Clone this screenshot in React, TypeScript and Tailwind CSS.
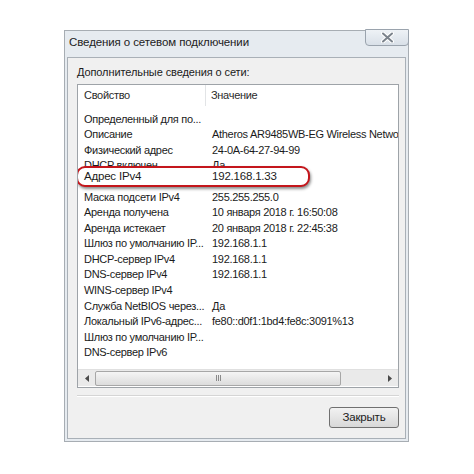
import React from 'react';

const rows: [string, string][] = [
  ['Определенный для по...', ''],
  ['Описание', 'Atheros AR9485WB-EG Wireless Network Adapter'],
  ['Физический адрес', '24-0A-64-27-94-99'],
  ['DHCP включен', 'Да'],
  ['Адрес IPv4', '192.168.1.33'],
  ['Маска подсети IPv4', '255.255.255.0'],
  ['Аренда получена', '10 января 2018 г. 16:50:08'],
  ['Аренда истекает', '20 января 2018 г. 22:45:38'],
  ['Шлюз по умолчанию IP...', '192.168.1.1'],
  ['DHCP-сервер IPv4', '192.168.1.1'],
  ['DNS-сервер IPv4', '192.168.1.1'],
  ['WINS-сервер IPv4', ''],
  ['Служба NetBIOS через...', 'Да'],
  ['Локальный IPv6-адрес...', 'fe80::d0f1:1bd4:fe8c:3091%13'],
  ['Шлюз по умолчанию IP...', ''],
  ['DNS-сервер IPv6', ''],
];

const font = { fontFamily: '"Liberation Sans", Arial, sans-serif' };

const App: React.FC = () => {
  return (
    <div className="w-[474px] h-[474px] bg-white pt-[30px] pl-[64px] text-[#1b1b1b]" style={font}>
      {/* Dialog window */}
      <div className="relative w-[345px] h-[412px] bg-[#e6ebf0] border border-[#a7adb3] flex flex-col px-[2px] pb-[2px]">
        {/* Title bar */}
        <div className="h-[26px] flex items-center pl-[2px] pb-[2px] text-[11.5px] tracking-[-0.1px] text-[#222]">
          Сведения о сетевом подключении
        </div>
        <div className="absolute right-[-1px] top-[-2px] w-[44px] h-[17px] rounded-b-[4px] border border-[#9aa3ad] bg-gradient-to-b from-[#eef2f6] to-[#d9e0e8] flex items-center justify-center">
          <svg width="13" height="11" viewBox="0 0 13 11">
            <path d="M2 1.5 L11 9.5 M11 1.5 L2 9.5" stroke="#ffffff" strokeWidth="4" strokeLinecap="round" />
            <path d="M2 1.5 L11 9.5 M11 1.5 L2 9.5" stroke="#7b838c" strokeWidth="2" strokeLinecap="round" />
          </svg>
        </div>

        {/* Client area */}
        <div className="flex-1 bg-[#f0f0f0] border border-[#a9b0b7] flex flex-col px-[9px]">
          <div className="h-[26px] flex items-center text-[11px] tracking-[-0.1px] pt-[3px]">
            Дополнительные сведения о сети:
          </div>

          {/* List view */}
          <div className="relative h-[304px] w-[322px] bg-white border border-[#9ea3a8] flex flex-col overflow-hidden">
            <div className="h-[21px] flex items-center text-[11px] tracking-[-0.3px] text-[#2b2b2b] shrink-0">
              <div className="w-[128px] pl-[6px] border-r border-[#e2e4e6] h-full flex items-center">Свойство</div>
              <div className="pl-[5px]">Значение</div>
            </div>
            <div className="flex-1 pt-[5px] text-[11px] tracking-[-0.3px]">
              {rows.map(([k, v], i) => (
                <div key={i} className="h-[15.6px] flex items-center whitespace-nowrap">
                  <div className="w-[128px] pl-[6px] shrink-0 overflow-hidden">{k}</div>
                  <div className="pl-[6px]">{v}</div>
                </div>
              ))}
            </div>

            {/* Horizontal scrollbar */}
            <div className="h-[17px] mb-[1px] shrink-0 bg-[#eaeaea] border-t border-[#e0e0e0] flex items-center">
              <div className="w-[17px] h-full flex items-center justify-center">
                <svg width="4" height="7" viewBox="0 0 4 7"><path d="M4 0 L0 3.5 L4 7 Z" fill="#4a4a4a" /></svg>
              </div>
              <div className="w-[246px] h-[15px] rounded-[2px] border border-[#a7a7a7] bg-gradient-to-b from-[#f5f5f5] to-[#dcdcdc] flex items-center justify-center">
                <div className="flex gap-[1px]">
                  <div className="w-[1px] h-[6px] bg-[#8a8a8a]" />
                  <div className="w-[1px] h-[6px] bg-[#8a8a8a]" />
                  <div className="w-[1px] h-[6px] bg-[#8a8a8a]" />
                </div>
              </div>
              <div className="flex-1" />
              <div className="w-[17px] h-full flex items-center justify-center">
                <svg width="4" height="7" viewBox="0 0 4 7"><path d="M0 0 L4 3.5 L0 7 Z" fill="#4a4a4a" /></svg>
              </div>
            </div>

            {/* Highlight callout */}
            <div className="absolute left-[-2px] top-[81px] w-[234px] h-[21px] rounded-[9px] border-[2.5px] border-[#c4161c] bg-white shadow-[1px_2px_3px_rgba(0,0,0,0.45)] flex items-center text-[11.5px] tracking-[-0.2px] whitespace-nowrap">
              <div className="w-[130px] pl-[6px]">Адрес IPv4</div>
              <div className="pl-[4px]">192.168.1.33</div>
            </div>
          </div>

          {/* Separator */}
          <div className="mt-[7px] h-[2px] w-[322px] border-t border-[#d5d5d5] border-b border-b-white" />

          <div className="flex justify-end w-[322px] mt-[10px]">
            <div className="w-[70px] h-[21px] rounded-[3px] border border-[#707070] bg-gradient-to-b from-[#f2f2f2] to-[#d8d8d8] flex items-center justify-center text-[11.5px] tracking-[-0.2px]">
              Закрыть
            </div>
          </div>
        </div>
      </div>
    </div>
  );
};

export default App;
